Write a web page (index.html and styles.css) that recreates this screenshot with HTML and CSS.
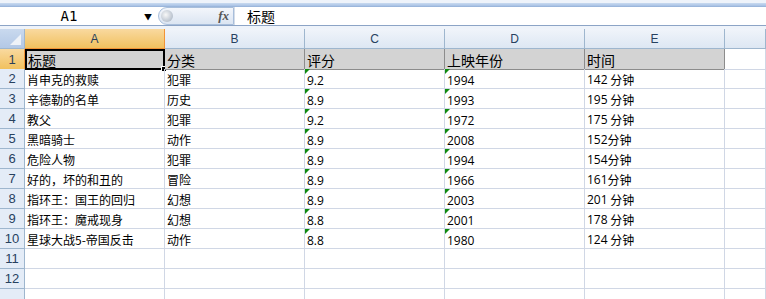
FILE: index.html
```html
<!DOCTYPE html>
<html lang="zh">

<head>
  <meta charset="UTF-8">
  <title>Sheet1</title>
  <link rel="stylesheet" href="styles.css">
</head>

<body>
  <div class="ribbon-edge"></div>

  <div class="formula-bar">
    <div class="name-box">
      <span class="name-ref">A1</span>
      <span class="drop">&#9660;</span>
    </div>
    <div class="fx-pill">
      <span class="knob"></span>
      <span class="fx">fx</span>
    </div>
    <div class="formula-text">标题</div>
  </div>
  <div class="bar-sep"></div>

  <div class="sheet">
    <!-- column headers -->
    <div class="corner"><span class="corner-tri"></span></div>
    <div class="col-head active">A</div>
    <div class="col-head">B</div>
    <div class="col-head">C</div>
    <div class="col-head">D</div>
    <div class="col-head">E</div>
    <div class="col-head"></div>

    <!-- row 1 -->
    <div class="row-head active tall">1</div>
    <div class="cell title tall selected">标题<span class="handle"></span></div>
    <div class="cell title tall">分类</div>
    <div class="cell title tall">评分</div>
    <div class="cell title tall">上映年份</div>
    <div class="cell title tall">时间</div>
    <div class="cell tall"></div>

    <div class="row-head">2</div>
    <div class="cell">肖申克的救赎</div>
    <div class="cell">犯罪</div>
    <div class="cell num">9.2</div>
    <div class="cell num">1994</div>
    <div class="cell"><span class="digits">142</span>&nbsp;分钟</div>
    <div class="cell"></div>

    <div class="row-head">3</div>
    <div class="cell">辛德勒的名单</div>
    <div class="cell">历史</div>
    <div class="cell num">8.9</div>
    <div class="cell num">1993</div>
    <div class="cell"><span class="digits">195</span>&nbsp;分钟</div>
    <div class="cell"></div>

    <div class="row-head">4</div>
    <div class="cell">教父</div>
    <div class="cell">犯罪</div>
    <div class="cell num">9.2</div>
    <div class="cell num">1972</div>
    <div class="cell"><span class="digits">175</span>&nbsp;分钟</div>
    <div class="cell"></div>

    <div class="row-head">5</div>
    <div class="cell">黑暗骑士</div>
    <div class="cell">动作</div>
    <div class="cell num">8.9</div>
    <div class="cell num">2008</div>
    <div class="cell"><span class="digits">152</span>分钟</div>
    <div class="cell"></div>

    <div class="row-head">6</div>
    <div class="cell">危险人物</div>
    <div class="cell">犯罪</div>
    <div class="cell num">8.9</div>
    <div class="cell num">1994</div>
    <div class="cell"><span class="digits">154</span>分钟</div>
    <div class="cell"></div>

    <div class="row-head">7</div>
    <div class="cell">好的，坏的和丑的</div>
    <div class="cell">冒险</div>
    <div class="cell num">8.9</div>
    <div class="cell num">1966</div>
    <div class="cell"><span class="digits">161</span>分钟</div>
    <div class="cell"></div>

    <div class="row-head">8</div>
    <div class="cell">指环王：国王的回归</div>
    <div class="cell">幻想</div>
    <div class="cell num">8.9</div>
    <div class="cell num">2003</div>
    <div class="cell"><span class="digits">201</span>&nbsp;分钟</div>
    <div class="cell"></div>

    <div class="row-head">9</div>
    <div class="cell">指环王：魔戒现身</div>
    <div class="cell">幻想</div>
    <div class="cell num">8.8</div>
    <div class="cell num">2001</div>
    <div class="cell"><span class="digits">178</span>&nbsp;分钟</div>
    <div class="cell"></div>

    <div class="row-head">10</div>
    <div class="cell">星球大战5-帝国反击</div>
    <div class="cell">动作</div>
    <div class="cell num">8.8</div>
    <div class="cell num">1980</div>
    <div class="cell"><span class="digits">124</span>&nbsp;分钟</div>
    <div class="cell"></div>

    <div class="row-head">11</div>
    <div class="cell"></div>
    <div class="cell"></div>
    <div class="cell"></div>
    <div class="cell"></div>
    <div class="cell"></div>
    <div class="cell"></div>

    <div class="row-head">12</div>
    <div class="cell"></div>
    <div class="cell"></div>
    <div class="cell"></div>
    <div class="cell"></div>
    <div class="cell"></div>
    <div class="cell"></div>

    <div class="row-head"></div>
    <div class="cell"></div>
    <div class="cell"></div>
    <div class="cell"></div>
    <div class="cell"></div>
    <div class="cell"></div>
    <div class="cell"></div>
  </div>
</body>

</html>
```

FILE: styles.css
```css
:root {
  --grid: #d0d7e5;
  --head-line: #9eb6ce;
  --head-text: #27415f;
}

* {
  box-sizing: border-box;
}

body {
  margin: 0;
  width: 766px;
  height: 299px;
  overflow: hidden;
  background: #fff;
  font-family: "Noto Sans CJK SC", sans-serif;
}

.ribbon-edge {
  height: 7px;
  background: linear-gradient(#eef3fa 0, #eef3fa 3px, #c9daf0 3px, #a7c1e4 6px, #8eabd3 7px);
}

.formula-bar {
  display: flex;
  align-items: center;
  height: 18px;
  background: #fff;
}

.name-box {
  display: flex;
  align-items: center;
  width: 158px;
  height: 18px;
  padding-right: 6px;
}

.name-ref {
  flex: 1;
  text-align: center;
  font-family: "DejaVu Sans Mono", monospace;
  font-size: 14px;
  color: #000;
  padding-right: 6px;
}

.drop {
  font-size: 8px;
  color: #000;
}

.fx-pill {
  display: flex;
  align-items: center;
  justify-content: space-between;
  width: 76px;
  height: 18px;
  padding: 0 4px 0 2px;
  border: 1px solid #a8bedb;
  border-radius: 9px 0 0 9px;
  background: linear-gradient(#f3f6fb, #dbe5f2);
}

.knob {
  width: 12px;
  height: 12px;
  border-radius: 50%;
  background: radial-gradient(circle at 40% 40%, #f8f8f8, #b9c2ce 70%);
}

.fx {
  font-family: "Liberation Serif", serif;
  font-style: italic;
  font-weight: bold;
  font-size: 13px;
  color: #555;
}

.formula-text {
  padding-left: 12px;
  font-size: 14px;
  color: #000;
  border-left: 1px solid #d5dde8;
  height: 18px;
  line-height: 18px;
}

.bar-sep {
  height: 4px;
  border-top: 1px solid #8ca4c6;
  background: #eef3fa;
}

.sheet {
  display: grid;
  grid-template-columns: 25px repeat(5, 140px) 1fr;
  grid-auto-rows: 20px;
}

.corner,
.col-head,
.row-head {
  border-right: 1px solid var(--head-line);
  border-bottom: 1px solid var(--head-line);
  background: linear-gradient(#f0f4fa, #dde7f3);
  color: var(--head-text);
  font-family: "Liberation Sans", sans-serif;
  font-size: 12px;
}

.corner {
  position: relative;
  background: linear-gradient(#c9d9ee, #b3c8e6);
}

.corner-tri {
  position: absolute;
  right: 3px;
  bottom: 3px;
  width: 0;
  height: 0;
  border-left: 11px solid transparent;
  border-bottom: 11px solid #eef2f8;
}

.col-head {
  display: flex;
  align-items: center;
  justify-content: center;
}

.row-head {
  display: flex;
  align-items: center;
  justify-content: center;
  font-size: 13px;
  background: #e4ecf7;
}

.col-head.active,
.row-head.active {
  background: linear-gradient(#f9d99f, #f1c15f);
  border-color: #f29436;
  color: #2a3f5a;
}

.tall {
  height: 21px;
}

.cell {
  position: relative;
  display: flex;
  align-items: center;
  padding: 1px 2px 0;
  border-right: 1px solid var(--grid);
  border-bottom: 1px solid var(--grid);
  font-size: 12px;
  color: #000;
  white-space: nowrap;
}

.cell.title {
  font-size: 14px;
  background: #d3d3d3;
  border-right-color: #8c8c8c;
  border-bottom-color: #8c8c8c;
}

.cell.selected {
  border: 2px solid #000;
  padding-left: 1px;
}

.handle {
  position: absolute;
  right: -4px;
  bottom: -4px;
  width: 6px;
  height: 6px;
  background: #000;
  border: 1px solid #fff;
}

.num,
.digits {
  font-family: "Open Sans", sans-serif;
  font-size: 12px;
}

.num {
  padding-top: 3px;
}

.num::before {
  content: "";
  position: absolute;
  left: 0;
  top: 0;
  width: 0;
  height: 0;
  border-top: 5px solid #0f8a0f;
  border-right: 5px solid transparent;
}
```
